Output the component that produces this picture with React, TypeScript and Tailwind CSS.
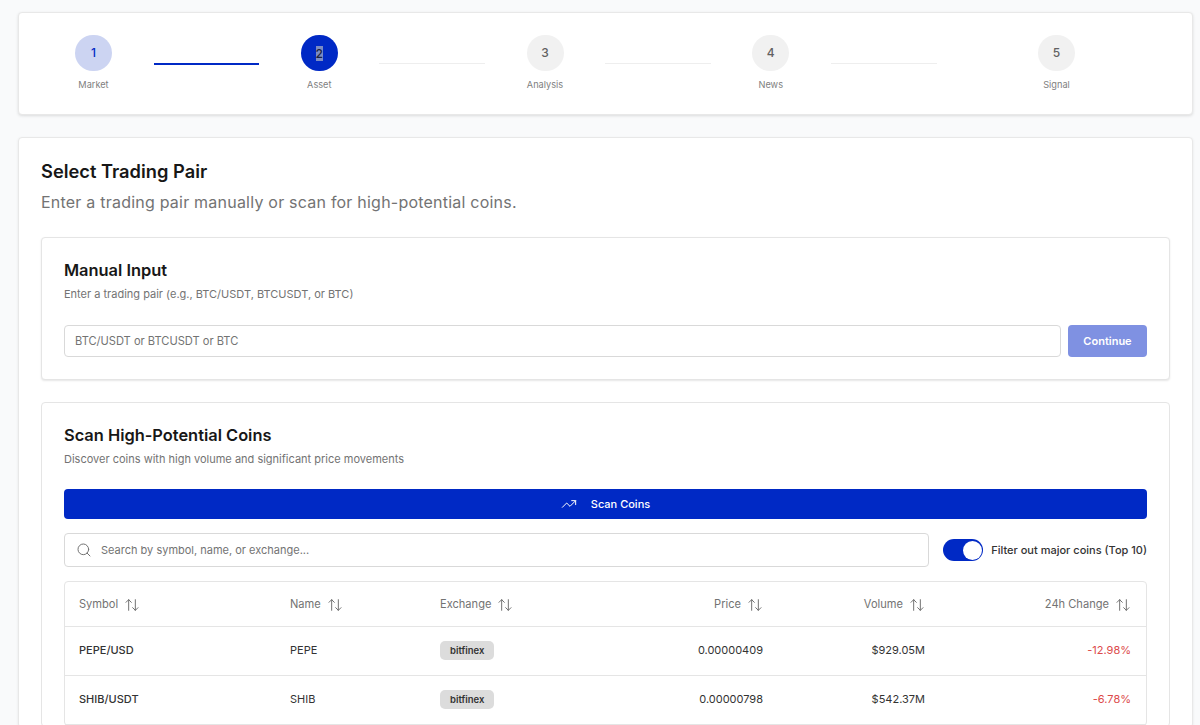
import { ArrowUpDown, Search, TrendingUp } from "lucide-react";

const steps = [
  { n: 1, label: "Market", state: "done" },
  { n: 2, label: "Asset", state: "active" },
  { n: 3, label: "Analysis", state: "todo" },
  { n: 4, label: "News", state: "todo" },
  { n: 5, label: "Signal", state: "todo" },
];

const coins = [
  { symbol: "PEPE/USD", name: "PEPE", exchange: "bitfinex", price: "0.00000409", volume: "$929.05M", change: "-12.98%" },
  { symbol: "SHIB/USDT", name: "SHIB", exchange: "bitfinex", price: "0.00000798", volume: "$542.37M", change: "-6.78%" },
];

function SortHead({ label, right }: { label: string; right?: boolean }) {
  return (
    <th className={`pl-[14px] pr-[15px] pt-[2px] text-[11.1px] font-normal text-[#737373] ${right ? "text-right" : "text-left"}`}>
      <span className="inline-flex items-center gap-[6px]">
        {label}
        <ArrowUpDown className="h-4 w-4" strokeWidth={1.5} />
      </span>
    </th>
  );
}

export default function App() {
  return (
    <div className="h-screen overflow-hidden bg-[#f9fafb] pl-[18px] pr-[7px] pt-3 font-['Inter',sans-serif] text-[#171717]">
      {/* Stepper */}
      <div className="flex h-[103px] rounded border border-[#e8e8e8] bg-white pl-[56px] pt-[22px] shadow-[0_1px_3px_rgba(0,0,0,0.12)]">
        {steps.map((step, i) => (
          <div key={step.n} className="flex items-start">
            <div className={`flex w-[37px] flex-col items-center ${i === 4 ? "ml-[60px]" : ""}`}>
              {step.state === "done" && (
                <div className="flex h-9 w-[37px] items-center justify-center rounded-full bg-[#ccd4f2] text-xs font-medium text-[#0029c5]">
                  {step.n}
                </div>
              )}
              {step.state === "active" && (
                <div className="flex h-9 w-[37px] items-center justify-center rounded-full bg-[#0029c5] text-xs font-medium text-[#1c2440]">
                  <span className="bg-[#7c8cc4] leading-[15px]">{step.n}</span>
                </div>
              )}
              {step.state === "todo" && (
                <div className="flex h-9 w-[37px] items-center justify-center rounded-full bg-[#f1f1f1] text-xs font-medium text-[#616161]">
                  {step.n}
                </div>
              )}
              <span className="mt-2 whitespace-nowrap text-[9.2px] leading-[12px] text-[#808080]">{step.label}</span>
            </div>
            {i < 4 && (
              <div
                className={`mx-[41.5px] mt-[28px] w-[105.75px] ${i === 0 ? "h-[2px] bg-[#0029c5]" : "h-px bg-[#eeeeee]"}`}
              />
            )}
          </div>
        ))}
      </div>

      {/* Main card */}
      <div className="mt-[22px] rounded border border-[#e8e8e8] bg-white px-[22px] pt-[22px] shadow-[0_1px_3px_rgba(0,0,0,0.08)]">
        <h1 className="text-[18.3px] font-semibold leading-[22px]">Select Trading Pair</h1>
        <p className="mt-[9px] text-base leading-[22px] tracking-[0.22px] text-[#737373]">
          Enter a trading pair manually or scan for high-potential coins.
        </p>

        {/* Manual input */}
        <div className="mt-[24px] h-[143px] rounded border border-[#e5e5e5] bg-white px-[22px] pt-[22px] shadow-[0_1px_2px_rgba(0,0,0,0.1)]">
          <h2 className="text-[16.4px] font-semibold leading-[20px]">Manual Input</h2>
          <p className="mt-[6px] text-[11px] leading-[16px] text-[#737373]">
            Enter a trading pair (e.g., BTC/USDT, BTCUSDT, or BTC)
          </p>
          <div className="mt-[23px] flex gap-[7px]">
            <div className="flex h-[32px] flex-1 items-center rounded border border-[#d9d9d9] px-[10px] text-[11.1px] text-[#737373]">
              BTC/USDT or BTCUSDT or BTC
            </div>
            <button className="h-[32px] w-[79px] rounded bg-[#7f91e2] text-[11px] font-semibold text-white">
              Continue
            </button>
          </div>
        </div>

        {/* Scan */}
        <div className="mt-[22px] rounded border border-[#e5e5e5] bg-white px-[22px] pt-[22px]">
          <h2 className="text-[16.4px] font-semibold leading-[20px]">Scan High-Potential Coins</h2>
          <p className="mt-[6px] text-[11px] leading-[16px] text-[#737373]">
            Discover coins with high volume and significant price movements
          </p>
          <button className="mt-[22px] flex h-[30px] w-full items-center justify-center gap-[14px] rounded bg-[#0029c5] text-[11px] font-medium text-white">
            <TrendingUp className="h-4 w-4" strokeWidth={1.5} />
            Scan Coins
          </button>

          <div className="mt-[14px] flex items-center">
            <div className="flex h-[34px] flex-1 items-center gap-[9px] rounded border border-[#d9d9d9] px-[11px] text-[11px] text-[#737373]">
              <Search className="h-4 w-4" strokeWidth={1.5} />
              Search by symbol, name, or exchange...
            </div>
            <div className="ml-[14px] flex h-[22px] w-10 items-center justify-end rounded-full bg-[#0029c5] p-[1.5px]">
              <div className="h-[19px] w-[19px] rounded-full bg-white" />
            </div>
            <span className="ml-2 whitespace-nowrap text-[11px] font-medium text-[#333333]">
              Filter out major coins (Top 10)
            </span>
          </div>

          {/* Table */}
          <div className="mt-[14px] rounded border border-[#e5e5e5]">
            <table className="w-full table-fixed border-collapse">
              <colgroup>
                <col className="w-[211px]" />
                <col className="w-[150px]" />
                <col className="w-[215px]" />
                <col className="w-[137px]" />
                <col className="w-[162px]" />
                <col />
              </colgroup>
              <thead>
                <tr className="h-[44px] border-b border-[#e5e5e5]">
                  <SortHead label="Symbol" />
                  <SortHead label="Name" />
                  <SortHead label="Exchange" />
                  <SortHead label="Price" right />
                  <SortHead label="Volume" right />
                  <SortHead label="24h Change" right />
                </tr>
              </thead>
              <tbody>
                {coins.map((coin) => (
                  <tr key={coin.symbol} className="h-[49px] border-b border-[#e5e5e5] text-[11px] text-[#333333]">
                    <td className="pl-[14px] pr-[15px] font-medium">{coin.symbol}</td>
                    <td className="pl-[14px] pr-[15px]">{coin.name}</td>
                    <td className="pl-[14px] pr-[15px]">
                      <span className="inline-block rounded-[5px] bg-[#dcdcdc] px-[10px] py-[2px] text-[9.5px] font-semibold leading-[15px]">
                        {coin.exchange}
                      </span>
                    </td>
                    <td className="pl-[14px] pr-[15px] text-right">{coin.price}</td>
                    <td className="pl-[14px] pr-[15px] text-right">{coin.volume}</td>
                    <td className="pl-[14px] pr-[15px] text-right text-[#dc4a4a]">{coin.change}</td>
                  </tr>
                ))}
              </tbody>
            </table>
          </div>
        </div>
      </div>
    </div>
  );
}
